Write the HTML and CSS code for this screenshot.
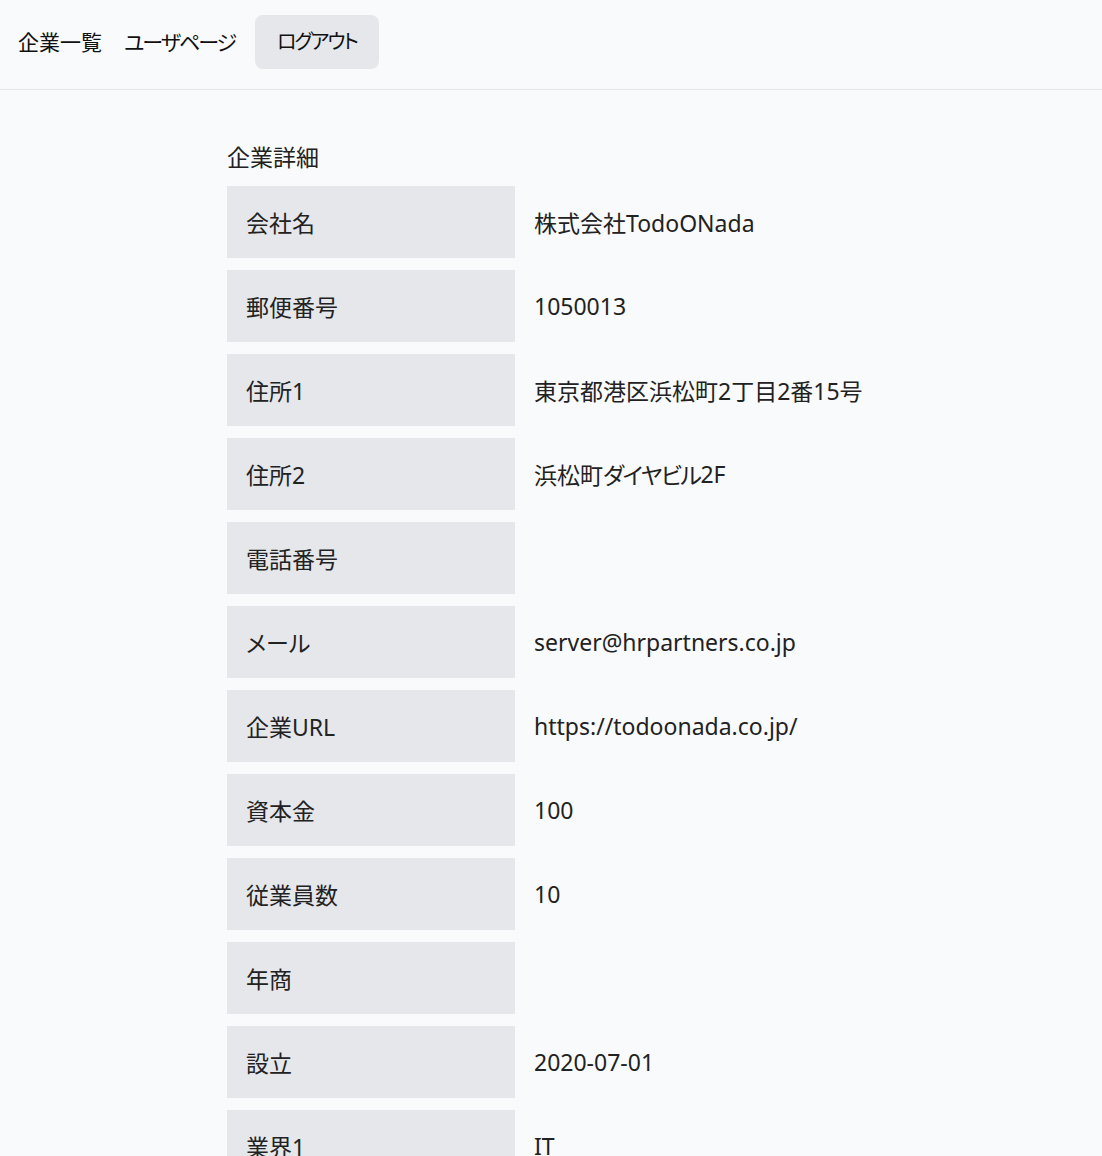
FILE: index.html
```html
<!DOCTYPE html>
<html lang="ja">
<head>
<meta charset="utf-8">
<title>企業詳細</title>
<link rel="stylesheet" href="styles.css">
</head>
<body>
<header class="header">
  <nav class="nav">
    <a class="nav-link" href="#">企業一覧</a>
    <a class="nav-link kana" href="#">ユーザページ</a>
    <button class="logout kana" type="button">ログアウト</button>
  </nav>
</header>
<main class="main">
  <h1 class="title">企業詳細</h1>
  <dl class="detail">
    <div class="row"><dt class="label">会社名</dt><dd class="value">株式会社TodoONada</dd></div>
    <div class="row"><dt class="label">郵便番号</dt><dd class="value">1050013</dd></div>
    <div class="row"><dt class="label">住所1</dt><dd class="value">東京都港区浜松町2丁目2番15号</dd></div>
    <div class="row"><dt class="label">住所2</dt><dd class="value">浜松町<span class="kana-s">ダイヤビル</span>2F</dd></div>
    <div class="row"><dt class="label">電話番号</dt><dd class="value"></dd></div>
    <div class="row"><dt class="label">メール</dt><dd class="value">server@hrpartners.co.jp</dd></div>
    <div class="row"><dt class="label">企業URL</dt><dd class="value">https://todoonada.co.jp/</dd></div>
    <div class="row"><dt class="label">資本金</dt><dd class="value">100</dd></div>
    <div class="row"><dt class="label">従業員数</dt><dd class="value">10</dd></div>
    <div class="row"><dt class="label">年商</dt><dd class="value"></dd></div>
    <div class="row"><dt class="label">設立</dt><dd class="value">2020-07-01</dd></div>
    <div class="row"><dt class="label">業界1</dt><dd class="value">IT</dd></div>
  </dl>
</main>
</body>
</html>
```
FILE: styles.css
```css
* { box-sizing: border-box; }
html, body { margin: 0; padding: 0; }
body {
  background: #f9fafb;
  color: #222;
  font-family: "Noto Sans", "Noto Sans CJK JP", sans-serif;
  font-feature-settings: "palt";
}
.header {
  padding: 15px 16px 20px;
  border-bottom: 1px solid #e5e7eb;
}
.nav {
  display: flex;
  align-items: center;
  gap: 20px;
}
.nav-link {
  color: #111;
  text-decoration: none;
  font-size: 21px;
  line-height: 28px;
  padding-left: 2px;
}
.kana {
  letter-spacing: -2px;
}
.kana-s {
  letter-spacing: -1.5px;
}
.logout {
  border: none;
  background: #e5e7eb;
  border-radius: 8px;
  padding: 13px 22px;
  font-family: inherit;
  font-feature-settings: "palt";
  font-size: 20px;
  line-height: 28px;
  color: #111;
}
.main {
  width: 648px;
  margin: 0 auto;
  padding-top: 50px;
}
.title {
  margin: 0 0 12px;
  font-size: 23px;
  font-weight: 400;
  line-height: 34px;
}
.detail {
  margin: 0;
  display: flex;
  flex-direction: column;
  gap: 12px;
}
.row {
  display: flex;
  height: 72px;
}
.label {
  width: 288px;
  flex: none;
  margin: 0;
  background: #e5e7eb;
  display: flex;
  align-items: center;
  padding-left: 19px;
  font-size: 23px;
}
.value {
  margin: 0;
  display: flex;
  align-items: center;
  padding-left: 19px;
  font-size: 23px;
}
```
